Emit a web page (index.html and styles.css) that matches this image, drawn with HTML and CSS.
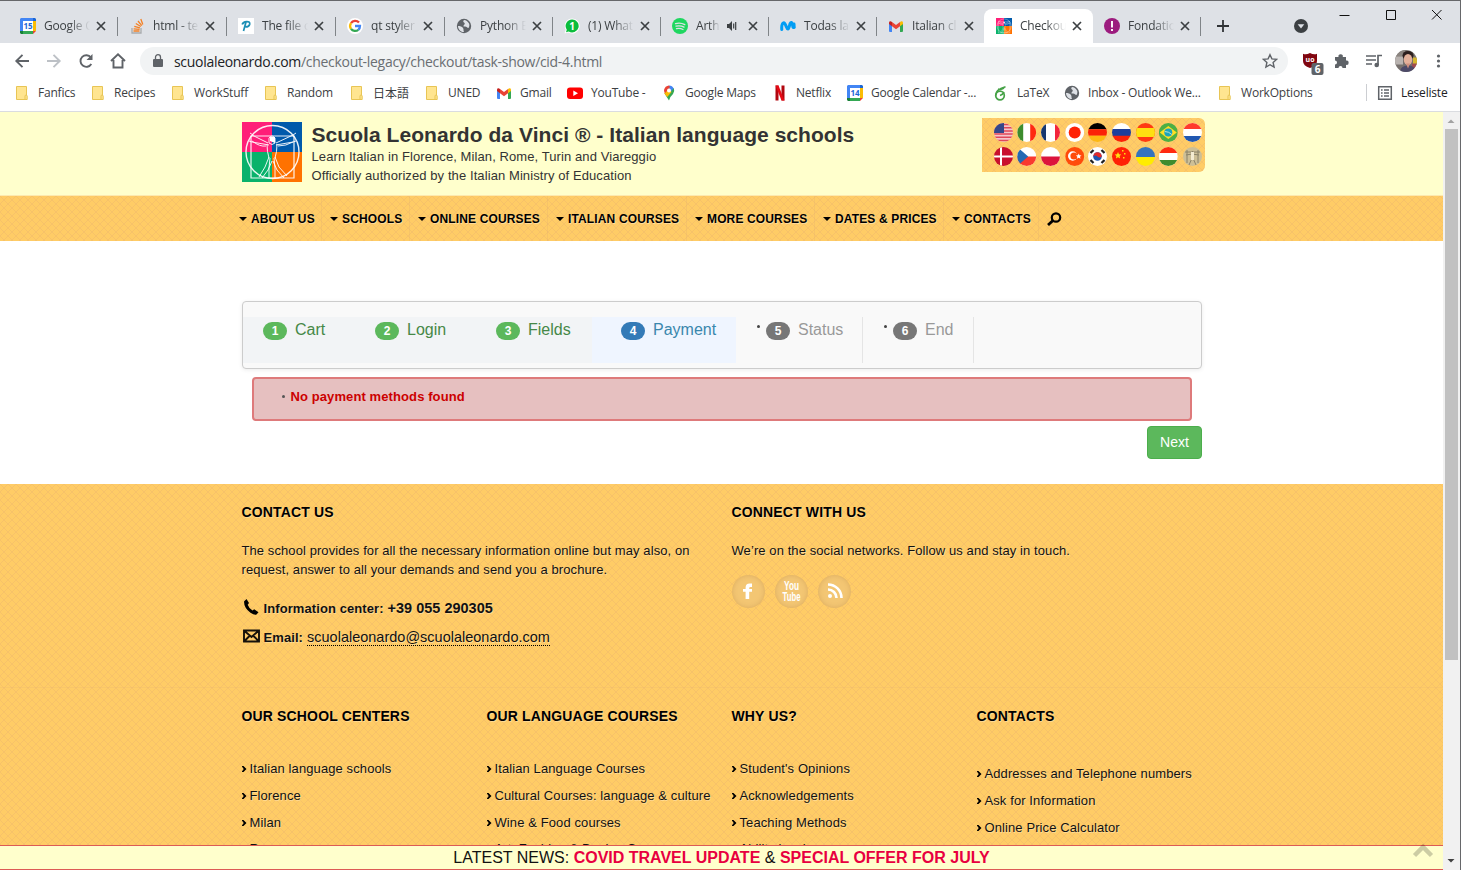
FILE: index.html
```html
<!DOCTYPE html>
<html lang="en">
<head>
<meta charset="utf-8">
<title>Checkout</title>
<link rel="stylesheet" href="styles.css">
</head>
<body>
<svg class="defs" width="0" height="0" aria-hidden="true">
  <defs>
    <symbol id="close" viewBox="0 0 10 10"><path d="M1 1l8 8M9 1l-8 8" stroke="#3c4043" stroke-width="1.7" fill="none"/></symbol>
    <symbol id="cal" viewBox="0 0 16 16"><path fill="#4285f4" d="M1 0h12v3H3v10H0V1z"/><path fill="#1a66d6" d="M13 0h2l1 1v2h-3z"/><path fill="#fbbc04" d="M13 3h3v10h-3z"/><path fill="#34a853" d="M3 13h10v3H3z"/><path fill="#188038" d="M0 13h3v3H1l-1-1z"/><path fill="#ea4335" d="M13 13h3l-3 3z"/><path fill="#fff" d="M3 3h10v10H3z"/></symbol>
    <symbol id="globe" viewBox="0 0 16 16"><circle cx="8" cy="8" r="7.2" fill="#5f6368"/><path fill="#dee1e6" d="M2 8c2 0 4 .5 5 2s0 2 1 4c-3 .4-6-2.500-6-6zM8 2c-1 1-1 2 0 2.600S9 6 8 7s-1 1.500 1 1.600 2 1.400 3.500 1.400c.8-1.500 1.300-3 .5-4.500C12 3.500 10 2.200 8 2z"/></symbol>
    <symbol id="gmail" viewBox="0 0 16 16"><path fill="#4285f4" d="M1 5l3 2.500V14H2a1 1 0 01-1-1z"/><path fill="#34a853" d="M12 7.500L15 5v8a1 1 0 01-1 1h-2z"/><path fill="#fbbc04" d="M12 4c1.500-1.500 3-.8 3 .8V6l-3 2.300z"/><path fill="#c5221f" d="M1 6V4.800C1 3.200 2.500 2.500 4 4v4.300z"/><path fill="#ea4335" d="M4 4l4 3 4-3v4.300l-4 3-4-3z"/></symbol>
    <symbol id="folder" viewBox="0 0 16 16"><path d="M2.500 1.500h10v13h-10z" fill="#ffe590" stroke="#e8c555"/><path d="M11 14.500v-3.300q0-1.200 1-1.200 1.200 0 1.200 1.200v3.300z" fill="#ffe590" stroke="#e8c555"/></symbol>
    <symbol id="vitruvian" viewBox="0 0 60 60"><path fill="#ff1f78" d="M0 0h30v30H0z"/><path fill="#005aab" d="M30 0h30v30H30z"/><path fill="#09b26b" d="M0 30h30v30H0z"/><path fill="#ff7200" d="M30 30h30v30H30z"/><g fill="none" stroke="#fff" stroke-opacity=".9"><circle cx="30.500" cy="30" r="26.500" stroke-width="1.400"/><path d="M9 14h43v42H9z" stroke-width="1.200"/><path d="M27 16q3-4 6 0v5q-3 3-6 0zM26 21L10 13M27 23L10 20M34 21l17-8M34 23l17-3M24 24q-6 1-14-5M36 24q8 0 15-4M25 22q0 8 2 14M35 22q0 8-2 14M27 35l-4 10-6 10M30 39l-4 9-6 8M33 35l4 10 8 9M31 39l4 9 7 8M28 36l-1 10v10M32 36l1 10v10M11 13l-3-2M10 20l-3-1M51 13l3-2M51 20l3-1" stroke-width="1"/></g><path fill="#fff" d="M28 15h5v6l-5-2z"/></symbol>
    <clipPath id="round"><circle cx="9.500" cy="9.500" r="9.500"/></clipPath>
  </defs>
</svg>

<div class="window">
  <div class="tabstrip">
    <div class="tab wide first"><svg class="fav"><use href="#cal"/><text x="8" y="11" class="calnum">15</text></svg><span class="tt">Google C</span><svg class="x"><use href="#close"/></svg></div>
    <div class="tab wide"><svg class="fav" viewBox="0 0 16 16"><path d="M3 10v5h9v-5" fill="none" stroke="#a9abad" stroke-width="1.300"/><path d="M4.500 13h6M4.600 10.800l6 .6M5.300 8.300l5.600 1.600M6.800 5.500l5 3M9 3l3.800 4.600M11.800 1l2 5.500" stroke="#f48024" stroke-width="1.300" fill="none"/></svg><span class="tt">html - tex</span><svg class="x"><use href="#close"/></svg></div>
    <div class="tab wide"><svg class="fav" viewBox="0 0 16 16"><path fill="#fff" d="M0 0h16v16H0z"/><path d="M4.200 6.500q.8-2.700 4.500-2.900 3.500-.1 3 2.600-.6 2.700-4.200 2.700M8 4L5.500 13" fill="none" stroke="#1d8fb5" stroke-width="1.700"/></svg><span class="tt">The file c</span><svg class="x"><use href="#close"/></svg></div>
    <div class="tab wide"><svg class="fav" viewBox="0 0 16 16"><circle cx="8" cy="8" r="8" fill="#fff"/><g fill="none" stroke-width="2.300"><path d="M12 4.600A5 5 0 004 5.200" stroke="#ea4335"/><path d="M4 5.200a5 5 0 000 5.600" stroke="#fbbc05"/><path d="M4 10.800a5 5 0 007.300 1" stroke="#34a853"/><path d="M11.300 11.800A5 5 0 0013 8H8" stroke="#4285f4"/></g></svg><span class="tt">qt styler</span><svg class="x"><use href="#close"/></svg></div>
    <div class="tab"><svg class="fav"><use href="#globe"/></svg><span class="tt">Python E</span><svg class="x"><use href="#close"/></svg></div>
    <div class="tab"><svg class="fav" viewBox="0 0 16 16"><path d="M8 .5a7.500 7.500 0 11-3.500 14L.5 15.500l1.200-3.800A7.500 7.500 0 018 .5z" fill="#fff"/><path d="M8 1.500a6.500 6.500 0 11-3.300 12L2 14.200l.8-2.500A6.500 6.500 0 018 1.500z" fill="#0bbd3c"/><text x="8" y="12" class="wanum">1</text></svg><span class="tt">(1) What</span><svg class="x"><use href="#close"/></svg></div>
    <div class="tab"><svg class="fav" viewBox="0 0 16 16"><circle cx="8" cy="8" r="8" fill="#1ed760"/><path d="M3.500 5.600q5-1.300 9.300 1M4 8.200q4.300-1.100 8 .9M4.500 10.700q3.500-.8 6.500.8" stroke="#dee1e6" stroke-width="1.300" fill="none" stroke-linecap="round"/></svg><span class="tt short">Arth</span><svg class="audio" viewBox="0 0 12 12"><path fill="#3c4043" d="M1 4h2l3-3v10L3 8H1z"/><path d="M7.700 3.500v5M9.700 2v8" stroke="#3c4043" stroke-width="1.200"/></svg><svg class="x"><use href="#close"/></svg></div>
    <div class="tab"><svg class="fav" viewBox="0 0 16 16"><path d="M1.800 11.500C1.300 6.500 3 3.500 4.700 5.500S6.500 11 8 11s1.500-7 3.400-6.500S12 11 14.200 9.300L14 6" stroke="#019df4" stroke-width="3" fill="none" stroke-linecap="round"/></svg><span class="tt">Todas la</span><svg class="x"><use href="#close"/></svg></div>
    <div class="tab"><svg class="fav"><use href="#gmail"/></svg><span class="tt">Italian cl</span><svg class="x"><use href="#close"/></svg></div>
    <div class="tab active"><svg class="fav"><use href="#vitruvian"/></svg><span class="tt">Checkou</span><svg class="x"><use href="#close"/></svg></div>
    <div class="tab first"><svg class="fav" viewBox="0 0 16 16"><circle cx="8" cy="8" r="8" fill="#9c1b7e"/><path d="M8 3v6.500M8 11v2" stroke="#fff" stroke-width="1.900"/></svg><span class="tt">Fondatio</span><svg class="x"><use href="#close"/></svg></div>
    <div class="newtab"><svg width="12" height="12"><path d="M6 0v12M0 6h12" stroke="#303336" stroke-width="1.800"/></svg></div>
    <svg class="tabsearch" width="14" height="14"><circle cx="7" cy="7" r="7" fill="#3c4043"/><path d="M3.700 5.200h6.600L7 9.400z" fill="#dee1e6"/></svg>
    <svg class="winbtns" width="104" height="12"><path d="M.5 6.500h10M47.500 1.500h9v9h-9zM93 1l9.500 9.500M102.500 1L93 10.500" fill="none" stroke="#111"/></svg>
  </div>

  <div class="toolbar">
    <svg class="nav-icons" width="114" height="16" fill="none" stroke-width="1.900"><path d="M15 8H2M8.500 1.800L2.300 8l6.200 6.200" stroke="#5f6368"/><path d="M33 8h12.500M39.500 1.800L45.700 8l-6.200 6.200" stroke="#bdc1c6"/><path d="M77.300 11a5.800 5.800 0 11-.4-6.500" stroke="#5f6368"/><path d="M78.500 1v6h-6z" fill="#5f6368"/><path d="M97 8l7-6.700L111 8M99.500 7v7.500h9V7" stroke="#5f6368"/></svg>
    <div class="omnibox">
      <svg width="10" height="14" viewBox="0 0 10 14"><path d="M1 5h8q1 0 1 1v6q0 1-1 1H1q-1 0-1-1V6q0-1 1-1z" fill="#5f6368"/><path d="M2.500 5V3.200a2.500 2.500 0 015 0V5" fill="none" stroke="#5f6368" stroke-width="1.300"/></svg>
      <span class="url"><b>scuolaleonardo.com</b>/checkout-legacy/checkout/task-show/cid-4.html</span>
      <svg class="star" width="16" height="16" viewBox="0 0 16 16"><path d="M8 1.700l1.900 4.200 4.600.5-3.400 3.100 1 4.600L8 11.700l-4.100 2.400 1-4.600L1.500 6.400l4.600-.5z" fill="none" stroke="#5f6368" stroke-width="1.400"/></svg>
    </div>
    <svg class="tools" width="146" height="28" viewBox="0 0 146 28">
      <path d="M8 6q4 2 7 .7V14q0 5-7 7-7-2-7-7V6.700Q4 8 8 6z" fill="#800610"/><text x="8" y="15" class="ubo">uo</text>
      <rect x="9.500" y="16" width="12" height="12" rx="2" fill="#5f6368"/><text x="15.500" y="26" class="ubn">6</text>
      <path d="M33 10h3.500a2.200 2.200 0 114.300 0H44v3.500a2.200 2.200 0 110 4.300V21h-3.500a2 2 0 10-4 0H33v-3.500a2 2 0 100-4z" fill="#5f6368"/>
      <path d="M64 9h10M64 13h10M64 17h6M76 18V8.500h4" fill="none" stroke="#5f6368" stroke-width="1.700"/><circle cx="74.700" cy="18" r="2.300" fill="#5f6368"/>
      <g transform="translate(93 2.500)"><clipPath id="av"><circle cx="11" cy="11.500" r="11"/></clipPath><g clip-path="url(#av)"><path fill="#77716e" d="M0 0h23v23H0z"/><path fill="#8b8580" d="M0 0h10v7H0z"/><path fill="#b9b3b0" d="M0 7h8v8H0z"/><path fill="#d5b62d" d="M18 8h5v8h-5z"/><path fill="#a04a50" d="M17 14h6v6h-6z"/><ellipse cx="13" cy="6" rx="5.500" ry="4.500" fill="#2c1f1e"/><ellipse cx="13" cy="10" rx="4.200" ry="5.500" fill="#e3b09a"/><path fill="#4d4a68" d="M5 23q0-7 8-7t7 7z"/><path fill="#d0907f" d="M11 14h4l-2 5z"/></g></g>
      <g fill="#5f6368"><circle cx="136.500" cy="9" r="1.600"/><circle cx="136.500" cy="14" r="1.600"/><circle cx="136.500" cy="19" r="1.600"/></g>
    </svg>
  </div>

  <div class="bookmarks">
    <span><svg><use href="#folder"/></svg>Fanfics</span>
    <span><svg><use href="#folder"/></svg>Recipes</span>
    <span><svg><use href="#folder"/></svg>WorkStuff</span>
    <span><svg><use href="#folder"/></svg>Random</span>
    <span class="jp"><svg><use href="#folder"/></svg>日本語</span>
    <span><svg><use href="#folder"/></svg>UNED</span>
    <span><svg><use href="#gmail"/></svg>Gmail</span>
    <span><svg><rect y="2.500" width="16" height="11.500" rx="3" fill="#f00"/><path d="M6.300 5.500v5.400L11 8.200z" fill="#fff"/></svg>YouTube -</span>
    <span><svg><path fill="#34a853" d="M3.500 8.500L8 15.500q1-4 4-6.500 2-3 .8-6z"/><path fill="#4285f4" d="M8 .5q3.500.2 4.600 3L6 10.500 3.700 7z"/><path fill="#fbbc04" d="M3.200 8.300L8 3l2.500 4-4.300 5z"/><path fill="#ea4335" d="M8 .5Q4 .8 3 5q0 2 1 3.300L9 2z"/><circle cx="8" cy="5.500" r="2" fill="#fff"/></svg>Google Maps</span>
    <span><svg><path fill="#b1060f" d="M3.500.5h3v15h-3zM9.500.5h3v15h-3z"/><path fill="#e50914" d="M3.500.5h3l6 15h-3z"/></svg>Netflix</span>
    <span><svg><use href="#cal"/><text x="8" y="11" class="calnum">14</text></svg>Google Calendar -...</span>
    <span><svg fill="none" stroke="#46a247" stroke-width="1.700"><circle cx="7" cy="10.500" r="4.300"/><path d="M2.800 10.500Q2.500 4.500 12.500 1.800M5 4q3 1 6-1M7 10.500q3-1 4-3.500"/></svg>LaTeX</span>
    <span><svg><use href="#globe"/></svg>Inbox - Outlook We...</span>
    <span><svg><use href="#folder"/></svg>WorkOptions</span>
    <span class="reading"><svg><path d="M1.700 1.700h12.600v12.600H1.700z" fill="none" stroke="#5f6368" stroke-width="1.500"/><path d="M4 5h1.600M4 8h1.600M4 11h1.600M7 5h5M7 8h5M7 11h5" stroke="#5f6368" stroke-width="1.400"/></svg>Leseliste</span>
  </div>

  <div class="viewport">
    <div class="page">
      <header class="masthead"><div class="wrap">
        <svg class="logo"><use href="#vitruvian"/></svg>
        <div class="brand">
          <h1>Scuola Leonardo da Vinci ® - Italian language schools</h1>
          <p>Learn Italian in Florence, Milan, Rome, Turin and Viareggio</p>
          <p>Officially authorized by the Italian Ministry of Education</p>
        </div>
        <div class="langs weave"><svg width="209" height="44" viewBox="0 0 209 44">
          <g transform="translate(0 0)" clip-path="url(#round)"><path fill="#f4c6cb" d="M0 0h19v19H0z"/><path stroke="#e0485a" stroke-width="1.500" d="M0 1.500h19M0 4.700h19M0 7.900h19M0 11.100h19M0 14.300h19M0 17.500h19"/><path fill="#35478a" d="M0 0h10v10H0z"/></g>
          <g transform="translate(23.200 0)" clip-path="url(#round)"><path fill="#fff" d="M0 0h19v19H0z"/><path fill="#3d8c2d" d="M0 0h6v19H0z"/><path fill="#ff2a10" d="M13 0h6v19h-6z"/></g>
          <g transform="translate(47 0)" clip-path="url(#round)"><path fill="#fff" d="M0 0h19v19H0z"/><path fill="#17376f" d="M0 0h5v19H0z"/><path fill="#f3243b" d="M14 0h5v19h-5z"/></g>
          <g transform="translate(71.200 0)" clip-path="url(#round)"><path fill="#fff" d="M0 0h19v19H0z"/><circle cx="9.500" cy="9.500" r="6" fill="#ff2106"/></g>
          <g transform="translate(94 0)" clip-path="url(#round)"><path d="M0 0h19v6.300H0z"/><path fill="#fb2207" d="M0 6.300h19v6.400H0z"/><path fill="#fdb913" d="M0 12.700h19V19H0z"/></g>
          <g transform="translate(118 0)" clip-path="url(#round)"><path fill="#fff" d="M0 0h19v7H0z"/><path fill="#1d3e9c" d="M0 6h19v7H0z"/><path fill="#fb2207" d="M0 12.700h19V19H0z"/></g>
          <g transform="translate(142 0)" clip-path="url(#round)"><path fill="#ff3a12" d="M0 0h19v19H0z"/><path fill="#fee011" d="M0 5h19v9H0z"/></g>
          <g transform="translate(164.800 0)" clip-path="url(#round)"><path fill="#4caf45" d="M0 0h19v19H0z"/><path fill="#ffdf22" d="M1 9.500L9.500 3 18 9.500 9.500 16z"/><circle cx="9.500" cy="9.500" r="4" fill="#1ba3bd"/><path d="M6 8.500q4 0 7 3" stroke="#b8e3d8" fill="none"/></g>
          <g transform="translate(189 0)" clip-path="url(#round)"><path fill="#fff" d="M0 0h19v19H0z"/><path fill="#ff3a2d" d="M0 0h19v6H0z"/><path fill="#2157b0" d="M0 13h19v6H0z"/></g>
          <g transform="translate(0 24)" clip-path="url(#round)"><path fill="#c8102e" d="M0 0h19v19H0z"/><path d="M7 0v19M0 9.500h19" stroke="#fff" stroke-width="2"/></g>
          <g transform="translate(23.200 24)" clip-path="url(#round)"><path fill="#fff" d="M0 0h19v19H0z"/><path fill="#f93a2f" d="M0 9.500h19V19H0z"/><path fill="#2469b3" d="M0 0l11 9.500L0 19z"/></g>
          <g transform="translate(47 24)" clip-path="url(#round)"><path fill="#fff" d="M0 0h19v19H0z"/><path fill="#dc143c" d="M0 9.500h19V19H0z"/></g>
          <g transform="translate(71.200 24)" clip-path="url(#round)"><path fill="#ff4b0b" d="M0 0h19v19H0z"/><circle cx="7.500" cy="9" r="4.700" fill="#fff"/><circle cx="8.800" cy="9" r="3.600" fill="#ff4b0b"/><path fill="#fff" d="M13.500 6.500l.8 1.800 2 .2-1.500 1.300.5 2-1.800-1-1.800 1 .5-2-1.500-1.300 2-.2z"/></g>
          <g transform="translate(94 24)" clip-path="url(#round)"><path fill="#fff" d="M0 0h19v19H0z"/><circle cx="9.500" cy="9.500" r="4.300" fill="#1f57b0"/><path d="M5.200 9.500a4.300 4.300 0 018.600 0q-2 2-4.300 0t-4.300 0" fill="#e42a2a"/><path d="M2.500 6l3-3M13.500 3l3 3M2.500 13l3 3M13.500 16l3-3" stroke="#222" stroke-width="2.300"/></g>
          <g transform="translate(118 24)" clip-path="url(#round)"><path fill="#ff2106" d="M0 0h19v19H0z"/><path fill="#fedf11" d="M6 5l1 2.300 2.300.2-1.700 1.600.5 2.400L6 10.300l-2.100 1.200.5-2.400L2.700 7.500 5 7.300zM10 3h1.500v1.500H10zM12 6h1.500v1.500H12zM11 10h1.500v1.500H11z"/></g>
          <g transform="translate(142 24)" clip-path="url(#round)"><path fill="#3674bd" d="M0 0h19v10H0z"/><path fill="#ffec00" d="M0 10h19v9H0z"/></g>
          <g transform="translate(164.800 24)" clip-path="url(#round)"><path fill="#fff" d="M0 0h19v19H0z"/><path fill="#ff2a10" d="M0 0h19v6H0z"/><path fill="#3f8c2e" d="M0 13h19v6H0z"/></g>
          <g transform="translate(189 24)" clip-path="url(#round)"><path fill="#cdbf96" d="M0 0h19v19H0z"/><path d="M2 5h15M9.500 4v7M3 8l6-1 7 1M9.500 10L6 18M9.500 10l3.500 8M4 3v13M15 3v13" stroke="#8a8268" fill="none"/><path fill="#f4ecd2" d="M8 5h3v8H8z"/></g>
        </svg></div>
      </div></header>

      <nav class="menu weave"><ul>
        <li>ABOUT US</li><li>SCHOOLS</li><li>ONLINE COURSES</li><li>ITALIAN COURSES</li><li>MORE COURSES</li><li>DATES &amp; PRICES</li><li>CONTACTS</li>
        <li class="search"><svg width="15" height="14"><circle cx="9" cy="5.500" r="4.200" fill="none" stroke="#000" stroke-width="2.200"/><path d="M6 8.500l-5 4.500" stroke="#000" stroke-width="2.800"/></svg></li>
      </ul></nav>

      <main class="checkout">
        <ol class="steps">
          <li class="done"><i>1</i>Cart</li>
          <li class="done"><i>2</i>Login</li>
          <li class="done"><i>3</i>Fields</li>
          <li class="current"><i>4</i>Payment</li>
          <li class="todo"><i>5</i>Status</li>
          <li class="todo"><i>6</i>End</li>
        </ol>
        <div class="alert">No payment methods found</div>
        <button class="next">Next</button>
      </main>

      <footer class="foot weave">
        <div class="top">
          <section>
            <h3>CONTACT US</h3>
            <p>The school provides for all the necessary information online but may also, on<br>request, answer to all your demands and send you a brochure.</p>
            <p class="phone"><svg width="18" height="18"><path d="M2 3.500L4.500 1 7 5 5.700 6.700q1.500 4 4.800 5.800l1.700-1.300 4.300 3-2 2.300q-2 .8-6-1.700Q2 10 2 3.500z"/></svg><b>Information center:</b> <strong>+39 055 290305</strong></p>
            <p class="mail"><svg width="18" height="14"><path d="M2 1.500h15v11H2zM2 1.500L9.500 8 17 1.500M2 12.500L7.500 7M17 12.500L11.500 7" fill="none" stroke="#15100a" stroke-width="1.900"/></svg><b>Email:</b> <a>scuolaleonardo@scuolaleonardo.com</a></p>
          </section>
          <section>
            <h3>CONNECT WITH US</h3>
            <p>We’re on the social networks. Follow us and stay in touch.</p>
            <div class="social">
              <span><svg width="33" height="33"><path d="M20 8.500V12h-1.500q-1.300 0-1.300 1.300V14H20v2.800h-2.800V24h-3.600v-7.200H11V14h2.600v-1.500q0-4 4-4z" fill="#fff"/></svg></span>
              <span><svg width="33" height="33" class="yt"><text x="16.500" y="15" textLength="15" lengthAdjust="spacingAndGlyphs">You</text><text x="16.500" y="26" textLength="18" lengthAdjust="spacingAndGlyphs">Tube</text></svg></span>
              <span><svg width="33" height="33" fill="none" stroke="#fff" stroke-width="2.600"><circle cx="12" cy="21" r="2" fill="#fff" stroke="none"/><path d="M10 14.500a8.500 8.500 0 018.500 8.500M10 9.500A13.500 13.500 0 0123.500 23"/></svg></span>
            </div>
          </section>
        </div>
        <div class="links">
          <section><h3>OUR SCHOOL CENTERS</h3><ul><li>Italian language schools</li><li>Florence</li><li>Milan</li><li>Rome</li></ul></section>
          <section><h3>OUR LANGUAGE COURSES</h3><ul><li>Italian Language Courses</li><li>Cultural Courses: language &amp; culture</li><li>Wine &amp; Food courses</li><li>Art, Fashion &amp; Design Courses</li></ul></section>
          <section><h3>WHY US?</h3><ul><li>Student's Opinions</li><li>Acknowledgements</li><li>Teaching Methods</li><li>Ability levels</li></ul></section>
          <section><h3>CONTACTS</h3><ul class="low"><li>Addresses and Telephone numbers</li><li>Ask for Information</li><li>Online Price Calculator</li></ul></section>
        </div>
      </footer>
      <div class="news">LATEST NEWS: <b>COVID TRAVEL UPDATE</b> &amp; <b>SPECIAL OFFER FOR JULY</b>
        <svg class="totop" width="22" height="15"><path d="M2.500 12.500L11 4l8.500 8.500" fill="none" stroke="#000" stroke-opacity=".2" stroke-width="4.500"/></svg>
      </div>
    </div>
    <div class="scrollbar">
      <svg width="16" height="17"><path d="M4.500 11L8 7.500l3.500 3.500z" fill="#a3a3a3"/></svg>
      <div class="thumb"></div>
      <svg class="down" width="16" height="17"><path d="M4.500 5L8 8.500 11.500 5z" fill="#404040"/></svg>
    </div>
  </div>
</div>
</body>
</html>
```
FILE: styles.css
```css
* { box-sizing: border-box; }
body { margin: 0; font-family: "Liberation Sans", Arial, sans-serif; font-size: 13px; overflow: hidden; }
h1, h3, p, ul, ol { margin: 0; padding: 0; }
ul, ol { list-style: none; }
svg { flex: none; }
.defs { position: absolute; }

.window { width: 1461px; height: 870px; display: flex; flex-direction: column; border-top: 1px solid #66676a; border-right: 1px solid #66676a; background: #fff; }

/* browser chrome */
.tabstrip, .toolbar, .bookmarks { font-family: "Open Sans", "Noto Sans", "Noto Sans CJK JP", sans-serif; font-size: 12px; letter-spacing: -.2px; color: #3c4043; flex: none; }
.tabstrip { height: 42px; background: #dee1e6; display: flex; padding: 8px 0 0 8px; }
.tab { width: 108px; height: 34px; display: flex; align-items: center; padding-left: 12px; flex: none; background: linear-gradient(#808488, #808488) 0 8px / 1px 19px no-repeat; }
.tab.wide { width: 109px; }
.tab.first { background: none; }
.tab.active { width: 109px; margin-right: -1px; background: #fff; border-radius: 8px 8px 0 0; }
.fav { width: 16px; height: 16px; }
.tt { width: 46px; margin-left: 8px; overflow: hidden; white-space: nowrap; line-height: 20px; -webkit-mask-image: linear-gradient(90deg, #000 55%, transparent); mask-image: linear-gradient(90deg, #000 55%, transparent); }
.tt.short { width: 24px; margin-right: 6px; }
.audio { width: 12px; height: 12px; margin-right: 4px; }
.x { width: 10px; height: 10px; margin-left: 6px; }
.newtab { width: 90px; border-left: 1px solid #808488; height: 19px; margin-top: 8px; padding: 3px 0 0 16px; line-height: 0; }
.tabsearch { margin: 10px 0 0 4px; }
.winbtns { margin: 0 0 0 31px; }
.calnum { font: bold 8px "Open Sans", sans-serif; fill: #1a66d6; text-anchor: middle; letter-spacing: 0; }
.wanum { font: bold 10px "Open Sans", sans-serif; fill: #fff; text-anchor: middle; letter-spacing: 0; }

.toolbar { height: 36px; display: flex; align-items: center; padding-left: 14px; }
.omnibox { width: 1148px; height: 28px; margin-left: 12px; border-radius: 14px; background: #f1f3f4; display: flex; align-items: center; padding: 0 10px 0 13px; }
.url { margin-left: 11px; font-size: 14px; letter-spacing: -.3px; color: #6a6e72; flex: 1; }
.url b { font-weight: normal; color: #202124; }
.star { width: 16px; }
.tools { margin-left: 14px; }
.ubo { font: bold 7px "Open Sans", sans-serif; fill: #fff; text-anchor: middle; letter-spacing: 0; }
.ubn { font: bold 10px "Open Sans", sans-serif; fill: #fff; text-anchor: middle; letter-spacing: 0; }

.bookmarks { height: 32px; display: grid; grid-template-columns: 76px 80px 93px 86px 75px 72px 71px 94px 111px 75px 146px 71px 153px 149px 94px; padding: 0 0 5px 14px; align-items: center; }
.bookmarks span { display: flex; align-items: center; white-space: nowrap; line-height: 17px; }
.bookmarks svg { width: 16px; height: 16px; margin-right: 8px; }
.bookmarks .reading { border-left: 1px solid #ccced2; padding-left: 10px; color: #202124; }
.bookmarks .jp { letter-spacing: 0; font-family: "Noto Sans CJK JP", sans-serif; }

.viewport { flex: 1; min-height: 0; display: flex; border-top: 1px solid #dadce0; }
.page { width: 1443px; display: flex; flex-direction: column; overflow: hidden; }
.scrollbar { width: 17px; background: #f1f1f1; display: flex; flex-direction: column; height: 759px; }
.thumb { width: 13px; height: 531px; margin-left: 2px; background: #c1c1c1; }
.down { margin-top: auto; }

/* fine crosshatch on an 8px tile */
.weave { background: #ffcc66 url("data:image/svg+xml,%3Csvg xmlns='http://www.w3.org/2000/svg' width='8' height='8'%3E%3Cpath d='M-1-1l10 10M9-1L-1 9' stroke='%23e8b070' stroke-opacity='.38' stroke-width='.9' fill='none'/%3E%3C/svg%3E"); }

/* masthead */
.masthead { height: 84px; flex: none; background: #ffffcc; border-bottom: 1px solid #fde9ae; }
.wrap { width: 963px; margin-left: 242px; display: flex; }
.logo { width: 60px; height: 60px; margin-top: 10px; }
.brand { width: 680px; padding: 11px 0 0 9.500px; color: #333; }
.brand h1 { font-size: 21px; line-height: 24px; letter-spacing: .05px; }
.brand p { line-height: 19px; letter-spacing: .09px; }
.langs { width: 223px; height: 54px; margin-top: 6px; padding: 5px 0 0 12px; border-radius: 0 6px 6px 0; }

.menu { height: 45px; flex: none; }
.menu ul { display: grid; grid-template-columns: 91px 88px 138px 139px 128px 129px 95px 60px; padding-left: 231px; }
.menu li { height: 45px; padding-left: 8px; display: flex; align-items: center; font-size: 12px; font-weight: bold; letter-spacing: .14px; white-space: nowrap; border-right: 1px solid rgba(230,180,110,.3); text-shadow: 1px 1px rgba(255,255,255,.35); }
.menu li::before { content: ""; border: 4px solid transparent; border-top: 4px solid #000; border-bottom: 0; margin: 0 4.500px 0 -.5px; }
.menu .search { padding-left: 8px; border: 0; }
.menu .search::before { display: none; }

/* checkout */
.checkout { height: 243px; flex: none; width: 960px; margin-left: 242px; padding-top: 60px; display: flex; flex-direction: column; }
.steps { height: 68px; border: 1px solid #ccc; border-radius: 4px; background: #f9f9f9; box-shadow: 0 1px 4px rgba(0,0,0,.08); display: grid; grid-template-columns: 112px 121px 116px 144px 127px 111px; padding-top: 15px; }
.steps li { height: 46px; padding: 3px 0 0 20px; font-size: 16px; line-height: 20px; display: flex; white-space: nowrap; }
.steps i { width: 24px; height: 18px; margin: 2px 8px 0 0; border-radius: 9px; color: #fff; font: bold 12px/18px "Liberation Sans", sans-serif; text-align: center; }
.done { background: #f2f4f6; color: #468847; }
.done i { background: #5cb85c; }
.steps .current { background: #eff5ff; color: #3a87ad; padding-left: 29px; }
.current i { background: #337ab7; }
.steps .todo { color: #999; padding-left: 21px; border-right: 1px solid #e5e5e5; }
.todo::before { content: ""; width: 3px; height: 3px; border-radius: 50%; background: #444; margin: 5px 6px 0 0; }
.todo i { background: #777; }
.alert { height: 44px; flex: none; margin: 8px 10px 5px; border: 2px solid #de7a7b; border-radius: 4px; background: #e6c0c0; color: #c00; font-weight: bold; line-height: 18px; padding: 9px 0 0 28px; letter-spacing: .1px; display: flex; }
.alert::before { content: ""; width: 3px; height: 3px; border-radius: 50%; background: #555; margin: 7px 5.500px 0 0; }
.next { width: 55px; height: 33px; align-self: flex-end; border: 1px solid #4cae4c; border-radius: 4px; background: #5cb85c; color: #fff; font: 14px/30px "Liberation Sans", sans-serif; padding: 0 0 1px; }

/* footer */
.foot { height: 361px; flex: none; color: #111; overflow: hidden; text-shadow: 1px 1px rgba(255,255,255,.3); }
.top { height: 204px; padding: 18px 0 0 241.500px; display: grid; grid-template-columns: 490px 1fr; border-bottom: 1px solid rgba(230,180,110,.25); }
.foot h3 { font-size: 14px; line-height: 20px; letter-spacing: .15px; color: #000; white-space: nowrap; }
.foot p { line-height: 19px; margin-top: 19px; letter-spacing: .085px; white-space: nowrap; }
.foot .phone, .foot .mail { display: flex; align-items: center; gap: 4px; }
.foot .phone { margin-top: 20px; }
.foot .phone svg, .foot .mail svg { margin: -3px 0 0 0; }
.foot .mail { margin-top: 10px; }
.phone strong, .mail a { font-size: 14.500px; letter-spacing: 0; }
.mail a { border-bottom: 1px dotted #000; line-height: 16px; }
.social { display: flex; gap: 10px; margin-top: 15px; }
.social span { width: 33px; height: 33px; border-radius: 50%; background: #f3c673; box-shadow: inset 0 0 5px rgba(190,140,70,.45); }
.yt { font: bold 12px "Liberation Sans", sans-serif; fill: #fff; text-anchor: middle; text-shadow: none; }
.links { display: grid; grid-template-columns: repeat(4, 245px); padding: 18px 0 0 241.500px; }
.links ul { margin-top: 29px; }
.links .low { margin-top: 34px; }
.links li { height: 27px; line-height: 27px; letter-spacing: .1px; white-space: nowrap; display: flex; align-items: center; }
.links li:nth-child(4) { margin-top: -1px; }
.links li::before { content: ""; width: 5px; height: 6px; background: #000; clip-path: polygon(0 0, 40% 0, 100% 50%, 40% 100%, 0 100%, 45% 50%); margin: 1px 3px 0 0; }

.news { height: 25px; flex: none; border-top: 1px solid #dd5a55; border-bottom: 1px solid #dd5a55; background: #ffffcc; text-align: center; font-size: 16px; line-height: 23px; color: #111; position: relative; }
.news b { color: #e8003f; }
.totop { position: absolute; right: 9px; top: -3px; }
```
